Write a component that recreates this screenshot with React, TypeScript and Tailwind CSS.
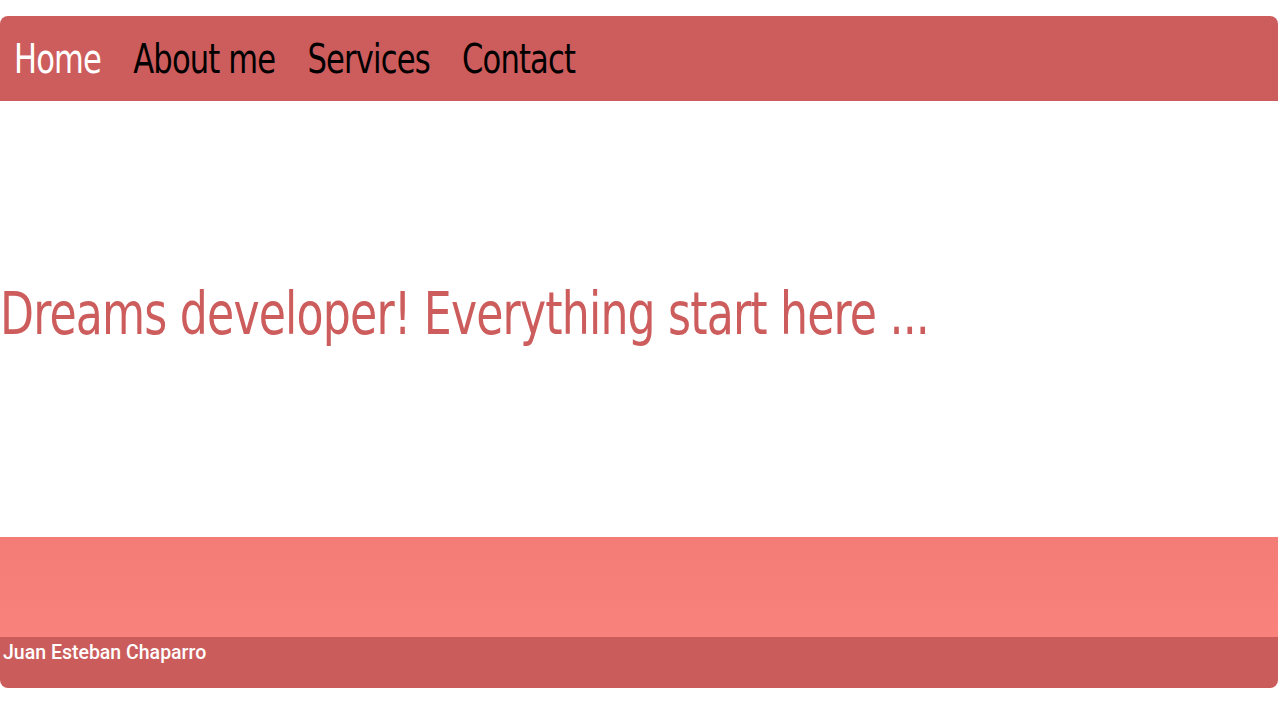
export default function App() {
  const cond = { fontFamily: "'DejaVu Sans Condensed', 'Liberation Sans Narrow', 'Roboto Condensed', sans-serif", fontStretch: "condensed" as const };
  return (
    <div className="w-[1278px] h-[723px] bg-white pt-4">
      <nav className="h-[85px] bg-[#cd5c5c] rounded-t-lg flex items-center pl-[14px]" style={cond}>
        <div className="flex gap-[38px] text-[40px] tracking-[-1px] origin-left scale-x-[0.85]">
          <a className="text-white">Home</a>
          <a className="text-black">About me</a>
          <a className="text-black">Services</a>
          <a className="text-black">Contact</a>
        </div>
      </nav>
      <main className="h-[436px] flex items-center pb-[12px]">
        <h1 className="text-[#cd5c5c] text-[59px] leading-none tracking-[-1px] whitespace-nowrap origin-left scale-x-[0.833]" style={cond}>Dreams developer! Everything start here ...</h1>
      </main>
      <footer>
        <div className="h-[100px] bg-gradient-to-b from-[#f37c77] to-[#fa827c]" />
        <div className="h-[51px] bg-[#cb5c5c] rounded-b-lg px-[3px] pt-[4px] leading-[24px] text-white text-[19.5px] font-medium" style={{ fontFamily: "Roboto, sans-serif" }}>
          Juan Esteban Chaparro
        </div>
      </footer>
    </div>
  );
}
